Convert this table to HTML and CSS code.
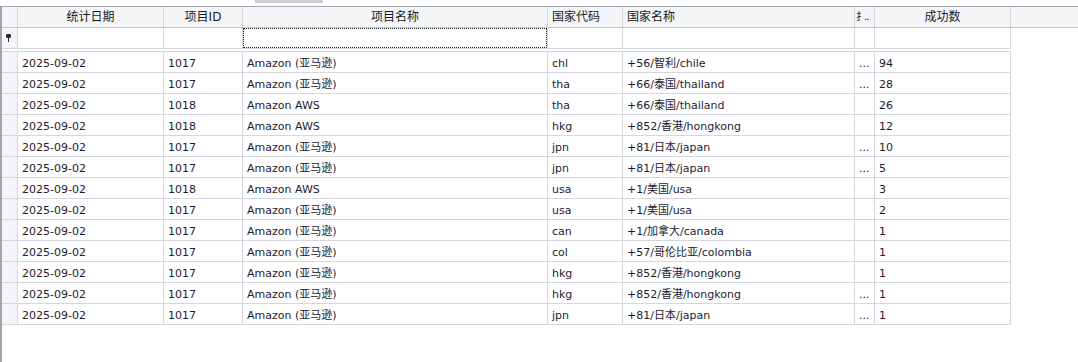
FILE: index.html
```html
<!DOCTYPE html>
<html lang="zh">
<head>
<meta charset="utf-8">
<title>Grid</title>
<link rel="stylesheet" href="styles.css">
</head>
<body>
<div class="top"><div class="thumb"></div></div>
<div class="grid">
  <div class="hdr">
    <div class="c w0"></div>
    <div class="c w1 ctr">统计日期</div>
    <div class="c w2 ctr">项目ID</div>
    <div class="c w3 ctr">项目名称</div>
    <div class="c w4">国家代码</div>
    <div class="c w5">国家名称</div>
    <div class="c w6 tight"><span class="rad">扌</span>..</div>
    <div class="c w7 ctr">成功数</div>
  </div>
  <div class="filter">
    <div class="c w0 ind"><svg width="5" height="8" viewBox="0 0 5 8"><path d="M1 0h3l1 1v2l-1 1H3v4H2V4H1L0 3V1z" fill="#2a2a2a"/></svg></div>
    <div class="c w1"></div>
    <div class="c w2"></div>
    <div class="c w3"><div class="focus"></div></div>
    <div class="c w4"></div>
    <div class="c w5"></div>
    <div class="c w6"></div>
    <div class="c w7"></div>
  </div>
  <div class="rows">
    <div class="row"><div class="c w0 ind"></div><div class="c w1">2025-09-02</div><div class="c w2">1017</div><div class="c w3">Amazon (亚马逊)</div><div class="c w4">chl</div><div class="c w5">+56/智利/chile</div><div class="c w6">...</div><div class="c w7">94</div></div>
    <div class="row"><div class="c w0 ind"></div><div class="c w1">2025-09-02</div><div class="c w2">1017</div><div class="c w3">Amazon (亚马逊)</div><div class="c w4">tha</div><div class="c w5">+66/泰国/thailand</div><div class="c w6">...</div><div class="c w7">28</div></div>
    <div class="row"><div class="c w0 ind"></div><div class="c w1">2025-09-02</div><div class="c w2">1018</div><div class="c w3">Amazon AWS</div><div class="c w4">tha</div><div class="c w5">+66/泰国/thailand</div><div class="c w6"></div><div class="c w7">26</div></div>
    <div class="row"><div class="c w0 ind"></div><div class="c w1">2025-09-02</div><div class="c w2">1018</div><div class="c w3">Amazon AWS</div><div class="c w4">hkg</div><div class="c w5">+852/香港/hongkong</div><div class="c w6"></div><div class="c w7">12</div></div>
    <div class="row"><div class="c w0 ind"></div><div class="c w1">2025-09-02</div><div class="c w2">1017</div><div class="c w3">Amazon (亚马逊)</div><div class="c w4">jpn</div><div class="c w5">+81/日本/japan</div><div class="c w6">...</div><div class="c w7">10</div></div>
    <div class="row"><div class="c w0 ind"></div><div class="c w1">2025-09-02</div><div class="c w2">1017</div><div class="c w3">Amazon (亚马逊)</div><div class="c w4">jpn</div><div class="c w5">+81/日本/japan</div><div class="c w6">...</div><div class="c w7">5</div></div>
    <div class="row"><div class="c w0 ind"></div><div class="c w1">2025-09-02</div><div class="c w2">1018</div><div class="c w3">Amazon AWS</div><div class="c w4">usa</div><div class="c w5">+1/美国/usa</div><div class="c w6"></div><div class="c w7">3</div></div>
    <div class="row"><div class="c w0 ind"></div><div class="c w1">2025-09-02</div><div class="c w2">1017</div><div class="c w3">Amazon (亚马逊)</div><div class="c w4">usa</div><div class="c w5">+1/美国/usa</div><div class="c w6"></div><div class="c w7">2</div></div>
    <div class="row"><div class="c w0 ind"></div><div class="c w1">2025-09-02</div><div class="c w2">1017</div><div class="c w3">Amazon (亚马逊)</div><div class="c w4">can</div><div class="c w5">+1/加拿大/canada</div><div class="c w6"></div><div class="c w7">1</div></div>
    <div class="row"><div class="c w0 ind"></div><div class="c w1">2025-09-02</div><div class="c w2">1017</div><div class="c w3">Amazon (亚马逊)</div><div class="c w4">col</div><div class="c w5">+57/哥伦比亚/colombia</div><div class="c w6"></div><div class="c w7">1</div></div>
    <div class="row"><div class="c w0 ind"></div><div class="c w1">2025-09-02</div><div class="c w2">1017</div><div class="c w3">Amazon (亚马逊)</div><div class="c w4">hkg</div><div class="c w5">+852/香港/hongkong</div><div class="c w6"></div><div class="c w7">1</div></div>
    <div class="row"><div class="c w0 ind"></div><div class="c w1">2025-09-02</div><div class="c w2">1017</div><div class="c w3">Amazon (亚马逊)</div><div class="c w4">hkg</div><div class="c w5">+852/香港/hongkong</div><div class="c w6">...</div><div class="c w7">1</div></div>
    <div class="row"><div class="c w0 ind"></div><div class="c w1">2025-09-02</div><div class="c w2">1017</div><div class="c w3">Amazon (亚马逊)</div><div class="c w4">jpn</div><div class="c w5">+81/日本/japan</div><div class="c w6">...</div><div class="c w7">1</div></div>
  </div>
</div>
</body>
</html>
```

FILE: styles.css
```css
html, body {
  margin: 0;
  padding: 0;
  background: #ffffff;
}
body {
  font-family: "DejaVu Sans", "Noto Sans CJK SC", sans-serif;
  font-size: 11px;
  color: #1c1c30;
  width: 1078px;
  height: 362px;
  overflow: hidden;
}
.top {
  height: 6px;
}
.thumb {
  margin-left: 255px;
  width: 68px;
  height: 3px;
  background: #cdcdd3;
}
.grid {
  box-sizing: border-box;
  height: 356px;
  border-top: 1px solid #a6a6b0;
  border-left: 2px solid #a3a3ac;
}
.hdr {
  display: flex;
  height: 20px;
  background: #f4f5f7;
  border-bottom: 1px solid #c7c7d0;
  font-size: 12px;
  color: #1a1a1a;
}
.hdr .c {
  line-height: 20px;
  padding-top: 0;
}
.filter, .row {
  display: flex;
  width: 1009px;
  height: 20px;
  border-bottom: 1px solid #d6d6de;
}
.rows {
  margin-top: 2px;
  border-top: 1px solid #d6d6de;
  width: 1009px;
}
.c {
  box-sizing: border-box;
  height: 20px;
  border-right: 1px solid #d6d6de;
  padding: 2px 4px 0 4px;
  line-height: 19px;
  white-space: nowrap;
  overflow: hidden;
  flex: none;
}
.ctr {
  text-align: center;
}
.hdr .tight {
  padding: 0 0 0 1px;
  font-size: 10px;
  letter-spacing: -1px;
}
.rad {
  letter-spacing: -2px;
}
.ind {
  background: #f4f5f7;
  padding: 0;
}
.filter .ind {
  display: flex;
  align-items: center;
  justify-content: center;
}
.filter .ind svg {
  margin-left: -2px;
}
.focus {
  box-sizing: border-box;
  height: 20px;
  margin: -2px -4px 0 -4px;
  border: 1px dotted #1a1a1a;
}
.w0 { width: 16px; }
.w1 { width: 146px; }
.w2 { width: 79px; }
.w3 { width: 305px; }
.w4 { width: 75px; }
.w5 { width: 232px; }
.w6 { width: 20px; }
.w7 { width: 136px; }
```
